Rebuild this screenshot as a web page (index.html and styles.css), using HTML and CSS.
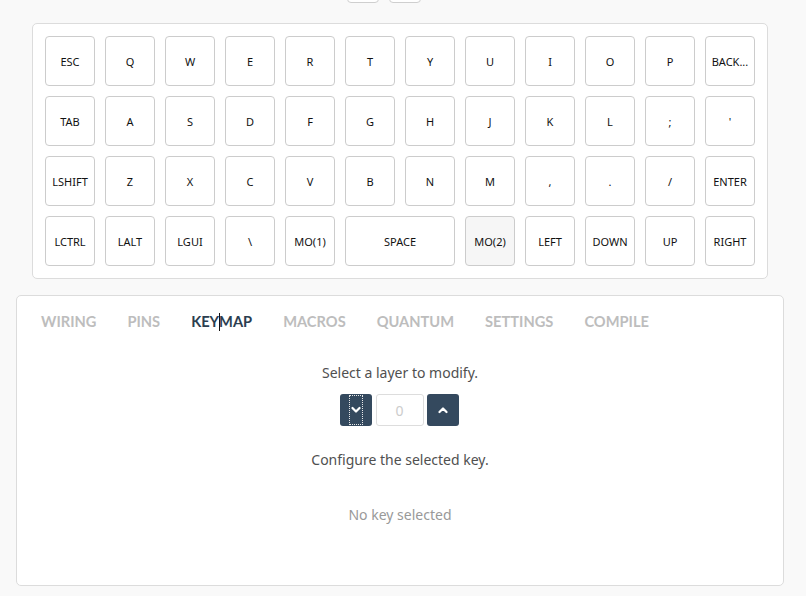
FILE: index.html
```html
<!DOCTYPE html>
<html>
<head>
<meta charset="utf-8">
<link rel="stylesheet" href="styles.css">
</head>
<body>
<div class="page">
  <div class="topbtns"><span class="tb"></span><span class="tb"></span></div>
  <div class="keyboard">
    <div class="key">ESC</div><div class="key">Q</div><div class="key">W</div><div class="key">E</div><div class="key">R</div><div class="key">T</div><div class="key">Y</div><div class="key">U</div><div class="key">I</div><div class="key">O</div><div class="key">P</div><div class="key">BACK...</div>
    <div class="key">TAB</div><div class="key">A</div><div class="key">S</div><div class="key">D</div><div class="key">F</div><div class="key">G</div><div class="key">H</div><div class="key">J</div><div class="key">K</div><div class="key">L</div><div class="key">;</div><div class="key">'</div>
    <div class="key">LSHIFT</div><div class="key">Z</div><div class="key">X</div><div class="key">C</div><div class="key">V</div><div class="key">B</div><div class="key">N</div><div class="key">M</div><div class="key">,</div><div class="key">.</div><div class="key">/</div><div class="key">ENTER</div>
    <div class="key">LCTRL</div><div class="key">LALT</div><div class="key">LGUI</div><div class="key">\</div><div class="key">MO(1)</div><div class="key wide">SPACE</div><div class="key active">MO(2)</div><div class="key">LEFT</div><div class="key">DOWN</div><div class="key">UP</div><div class="key">RIGHT</div>
  </div>
  <div class="panel">
    <nav class="tabs">
      <span class="tab">WIRING</span>
      <span class="tab">PINS</span>
      <span class="tab current">KEY<span class="caret"></span>MAP</span>
      <span class="tab">MACROS</span>
      <span class="tab">QUANTUM</span>
      <span class="tab">SETTINGS</span>
      <span class="tab">COMPILE</span>
    </nav>
    <div class="content">
      <p class="label">Select a layer to modify.</p>
      <div class="layer">
        <button class="lbtn"><span class="focus"><svg width="10" height="8" viewBox="0 0 10 8"><path d="M1.5 2 L5 5.5 L8.5 2" fill="none" stroke="#fff" stroke-width="2.2" stroke-linecap="round" stroke-linejoin="round"/></svg></span></button>
        <div class="lval">0</div>
        <button class="lbtn up"><svg width="10" height="8" viewBox="0 0 10 8"><path d="M1.5 6 L5 2.5 L8.5 6" fill="none" stroke="#fff" stroke-width="2.2" stroke-linecap="round" stroke-linejoin="round"/></svg></button>
      </div>
      <p class="label config">Configure the selected key.</p>
      <p class="none">No key selected</p>
    </div>
  </div>
</div>
</body>
</html>
```

FILE: styles.css
```css
html, body {
  margin: 0;
  padding: 0;
  background: #f9f9f9;
}
.page {
  width: 768px;
  margin-left: 16px;
  font-family: "Noto Sans", "Open Sans", sans-serif;
}
.topbtns {
  height: 3px;
  display: flex;
  align-items: flex-end;
  gap: 10px;
  padding-left: 331px;
}
.tb {
  flex: none;
  width: 32px;
  height: 20px;
  border: 1px solid #cfcfcf;
  border-radius: 4px;
  background: #fff;
  box-sizing: border-box;
}
.keyboard {
  margin: 20px 16px 0;
  background: #fff;
  border: 1px solid #dcdcdc;
  border-radius: 5px;
  padding: 12px;
  display: grid;
  grid-template-columns: repeat(12, 50px);
  grid-auto-rows: 50px;
  gap: 10px;
}
.key {
  box-sizing: border-box;
  border: 1px solid #cccccc;
  border-radius: 4px;
  background: #fff;
  display: flex;
  align-items: center;
  justify-content: center;
  font-size: 11px;
  color: #111;
}
.key.wide { grid-column: span 2; }
.key.active { background: #f6f6f6; }
.panel {
  margin-top: 16px;
  height: 291px;
  box-sizing: border-box;
  background: #fff;
  border: 1px solid #dcdcdc;
  border-radius: 5px;
}
.tabs {
  display: flex;
  gap: 31px;
  padding: 17px 24px 0;
  font-family: Lato, "Open Sans", sans-serif;
  font-weight: 700;
  font-size: 14.65px;
  line-height: 18px;
}
.tab { color: #bdbdbd; }
.tab.current { color: #2c3e50; }
.caret {
  display: inline-block;
  width: 1px;
  height: 18px;
  background: #111;
  vertical-align: top;
  margin: 0 -0.5px;
}
.content {
  text-align: center;
}
.label {
  margin: 0;
  font-size: 14px;
  color: #505050;
  line-height: 18px;
}
.content > .label:first-child { margin-top: 33px; }
.layer {
  display: flex;
  justify-content: center;
  gap: 4px;
  margin-top: 12px;
  padding-right: 2px;
}
.lbtn {
  width: 32px;
  height: 32px;
  border: none;
  border-radius: 3px;
  background: #34495e;
  padding: 0;
  display: flex;
  align-items: center;
  justify-content: center;
}
.lbtn.up { margin-left: -1px; }
.focus {
  display: flex;
  align-items: center;
  justify-content: center;
  width: 14px;
  height: 30px;
  box-sizing: border-box;
  border: 1px dotted #e8e8e8;
}
.lval {
  width: 48px;
  height: 32px;
  box-sizing: border-box;
  border: 1px solid #dddddd;
  border-radius: 3px;
  display: flex;
  align-items: center;
  justify-content: center;
  font-size: 14px;
  color: #cccccc;
}
.config { margin-top: 25px; }
.none {
  margin: 37px 0 0;
  font-size: 14px;
  line-height: 18px;
  color: #999;
}
```
